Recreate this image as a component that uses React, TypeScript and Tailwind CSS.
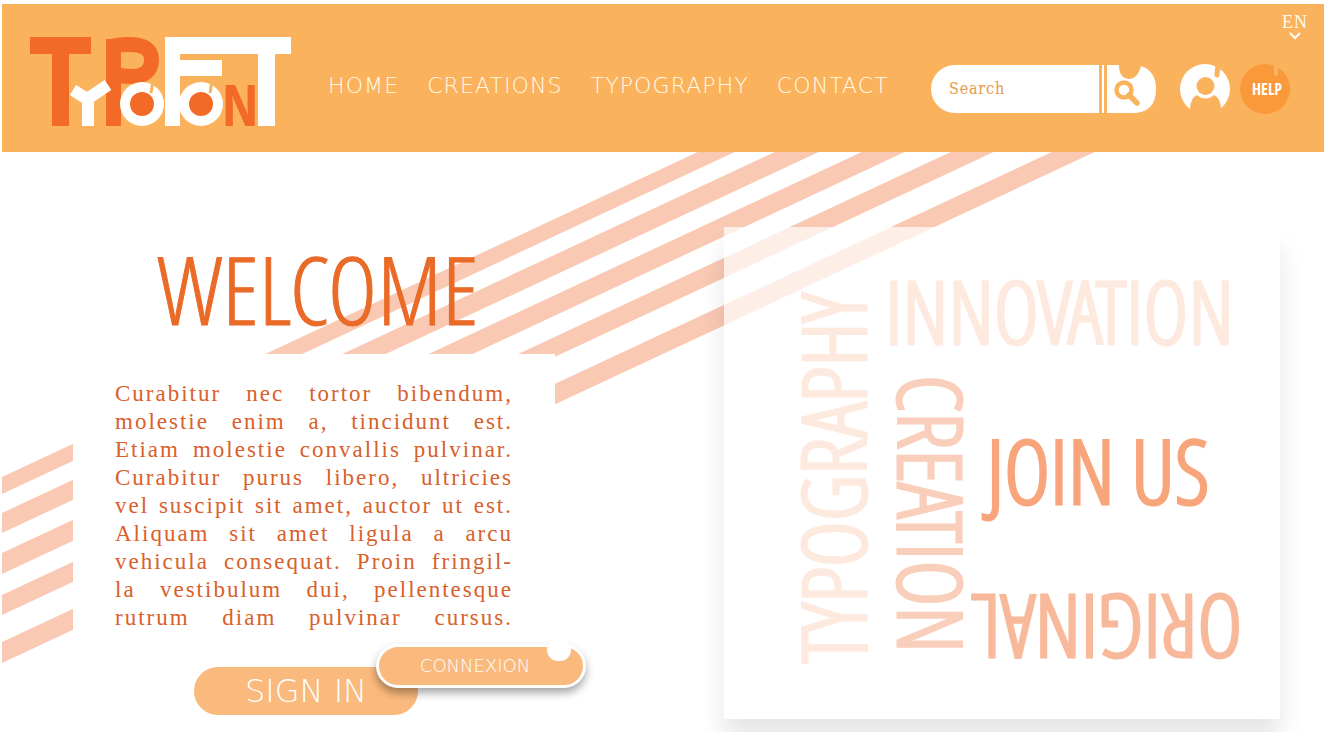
const navItems = ["HOME", "CREATIONS", "TYPOGRAPHY", "CONTACT"];

const introLines = [
  "Curabitur nec tortor bibendum,",
  "molestie enim a, tincidunt est.",
  "Etiam molestie convallis pulvinar.",
  "Curabitur purus libero, ultricies",
  "vel suscipit sit amet, auctor ut est.",
  "Aliquam sit amet ligula a arcu",
  "vehicula consequat. Proin fringil-",
  "la vestibulum dui, pellentesque",
  "rutrum diam pulvinar cursus.",
];

function Logo() {
  return (
    <svg viewBox="30 26 262 120" className="h-[120px] w-[262px] shrink-0" role="img" aria-label="Typo Font">
      <g fill="#f26a26">
        <rect x="30" y="37" width="61" height="17" />
        <rect x="52" y="37" width="17" height="89" />
        <rect x="106" y="39" width="15" height="87" />
      </g>
      <path d="M113.500 46 Q120 44.500 129 44.500 Q151.500 44.500 151.500 59.500 Q151.500 76.500 131 76.500 Q123 76.500 115 74.500" fill="none" stroke="#f26a26" strokeWidth="15" />
      <g fill="#fff">
        <rect x="165" y="37" width="126" height="17" />
        <rect x="165" y="37" width="15" height="89" />
        <rect x="180" y="60" width="42" height="16" />
        <rect x="258" y="37" width="17" height="89" />
      </g>
      <g stroke="#fff" strokeWidth="12" fill="none">
        <path d="M73 90 L87 99 L108 85" />
        <path d="M88 96 V126" />
      </g>
      {[142, 201].map((cx) => (
        <g key={cx}>
          <circle cx={cx} cy="104" r="22" fill="#fff" />
          <circle cx={cx} cy="104" r="12" fill="#f26a26" />
          <path d={`M${cx + 11} 81 L${cx + 9} 93`} stroke="#fbb25d" strokeWidth="3" />
        </g>
      ))}
      <text x="222" y="126" fill="#f26a26" fontSize="58" fontWeight="700" fontFamily="'Open Sans Condensed', 'Roboto Condensed', sans-serif">N</text>
    </svg>
  );
}

function SearchBar() {
  return (
    <form className="flex h-12 gap-[3px]" onSubmit={(e) => e.preventDefault()}>
      <input
        type="text"
        aria-label="Search"
        placeholder="Search"
        className="w-[168px] rounded-l-full bg-white pl-[18px] font-['DejaVu_Serif_Condensed','DejaVu_Serif',serif] text-base tracking-wider text-[#e59a4e] outline-none placeholder:text-[#e59a4e]"
      />
      <span className="w-[2px] bg-white" />
      <button type="submit" aria-label="Run search" className="h-12 w-[49px]">
        <svg viewBox="0 0 49 48" className="h-12 w-[49px]">
          <path d="M0 0 H12 Q12 14 23 14 Q31 13 34 1 Q49 6 49 24 Q49 48 25 48 H0 Z" fill="#fff" />
          <circle cx="17" cy="25" r="7.500" fill="none" stroke="#fbb25d" strokeWidth="4.500" />
          <path d="M22 30 L30 38" stroke="#fbb25d" strokeWidth="5.500" strokeLinecap="round" />
        </svg>
      </button>
    </form>
  );
}

function Header() {
  return (
    <header className="relative mt-1 ml-[2px] flex min-h-[148px] items-center bg-[#fbb25d] pt-4 pr-[34px] pl-7">
      <Logo />
      <nav className="ml-9 flex gap-7 font-['DejaVu_Sans_Light','DejaVu_Sans',sans-serif] text-[22px] leading-7 font-extralight tracking-wider text-[#fffbe8]">
        {navItems.map((item) => (
          <a key={item} href={"#" + item.toLowerCase()}>{item}</a>
        ))}
      </nav>
      <div className="ml-auto flex items-center pt-1.5">
        <SearchBar />
        <button type="button" aria-label="Account" className="ml-6 h-[50px] w-[50px]">
          <svg viewBox="0 0 50 50" className="h-[50px] w-[50px]">
            <circle cx="25" cy="25" r="25" fill="#fff" />
            <path d="M10 46 Q10 34 17 31 H34 Q41 34 41 46 L40 50 H11 Z" fill="#fbb25d" />
            <circle cx="25.500" cy="22" r="12.500" fill="#fff" />
            <circle cx="25.500" cy="22" r="9" fill="#fbb25d" />
            <path d="M38 0 L37 11" stroke="#fbb25d" strokeWidth="5" strokeLinecap="round" />
          </svg>
        </button>
        <button type="button" className="relative ml-2.5 flex h-[50px] w-[50px] items-center justify-center rounded-full bg-[#f9993a] pl-1 font-['Open_Sans_Condensed','Roboto_Condensed',sans-serif] text-base leading-5 font-bold text-white">
          <span className="absolute top-0 right-3 h-3 w-1 rounded-full bg-[#fbb25d]" />
          HELP
        </button>
      </div>
      <div className="absolute top-2 right-4 flex flex-col items-center text-[#fffbe8]">
        <select aria-label="Language" className="appearance-none bg-transparent font-['Liberation_Serif',serif] text-lg leading-5 tracking-wider outline-none">
          <option>EN</option>
          <option>FR</option>
        </select>
        <svg viewBox="0 0 12 8" className="h-2 w-3" fill="none" stroke="#fff" strokeWidth="2">
          <path d="M1 1 L6 6 L11 1" />
        </svg>
      </div>
    </header>
  );
}

function Stripes() {
  return (
    <svg viewBox="0 152 1324 580" className="absolute top-0 left-0 h-[580px] w-[1324px]" fill="#f9c9b3" aria-hidden="true">
      <path d="M2 477 L702 150 H739 L2 494 Z" />
      <path d="M2 513 L779 150 H823 L2 533 Z" />
      <path d="M2 553 L866 150 H909 L2 574 Z" />
      <path d="M2 595 L955 150 H998 L2 615 Z" />
      <path d="M2 642 L1056 150 H1099 L2 663 Z" />
    </svg>
  );
}

function Poster() {
  return (
    <section className="relative mt-[75px] mr-11 flex min-h-[492px] w-[42%] shrink-0 gap-[18px] self-start bg-white/70 pt-11 pb-14 pl-[73px] font-['Open_Sans_Condensed_Light','Roboto_Condensed',sans-serif] text-[88px] leading-[70px] font-light whitespace-nowrap text-[#fde9de] shadow-[0_20px_24px_rgba(0,0,0,0.10)] [-webkit-text-stroke:3px_currentColor]">
      <p className="self-end rotate-180 [writing-mode:vertical-rl]">TYPOGRAPHY</p>
      <div className="flex flex-col">
        <p className="text-[86px] leading-[80px]">INNOVATION</p>
        <div className="flex flex-1 gap-1 pt-6 pl-3">
          <p className="text-[#f9cfbb] [writing-mode:vertical-rl]">CREATION</p>
          <div className="flex flex-1 flex-col items-start justify-between pt-[60px]">
            <a href="#join" className="pl-4 text-[#f8a57c]">JOIN US</a>
            <p className="rotate-180 text-[86px] text-[#f8b99b]">ORIGINAL</p>
          </div>
        </div>
      </div>
    </section>
  );
}

export default function App() {
  return (
    <div className="overflow-hidden bg-white">
      <Header />
      <main className="relative flex min-h-[580px] justify-between">
        <Stripes />
        <section className="relative ml-[73px] w-[482px] shrink-0">
          <h1 className="flex h-[202px] items-center justify-center pt-[70px] pl-2 font-['Open_Sans_Condensed_Light','Roboto_Condensed',sans-serif] text-[95px] leading-[84px] font-light text-[#ea6a28] [-webkit-text-stroke:1px_currentColor]">
            WELCOME
          </h1>
          <div className="min-h-[378px] bg-white pt-[26px]">
            <p className="mx-auto w-[398px] font-['Liberation_Serif',serif] text-[23px] leading-7 tracking-[2px] text-[#d9602a]">
              {introLines.map((line) => (
                <span key={line} className="block whitespace-nowrap [text-align-last:justify]">{line}</span>
              ))}
            </p>
            <div className="mt-3 ml-[121px] flex items-start font-['DejaVu_Sans_Light','DejaVu_Sans',sans-serif] font-extralight text-white">
              <button type="button" className="mt-[23px] h-12 w-56 shrink-0 rounded-full bg-[#fab97d] text-[32px] leading-10">SIGN IN</button>
              <button type="button" className="relative -ml-[42px] h-11 w-[210px] shrink-0 rounded-full border-3 border-white bg-[#fab97d] pr-3 text-[18px] leading-6 shadow-[0_5px_8px_rgba(0,0,0,0.35)]">
                <span className="absolute -top-2 right-3 h-[22px] w-6 rounded-full bg-white" />
                CONNEXION
              </button>
            </div>
          </div>
        </section>
        <Poster />
      </main>
    </div>
  );
}
